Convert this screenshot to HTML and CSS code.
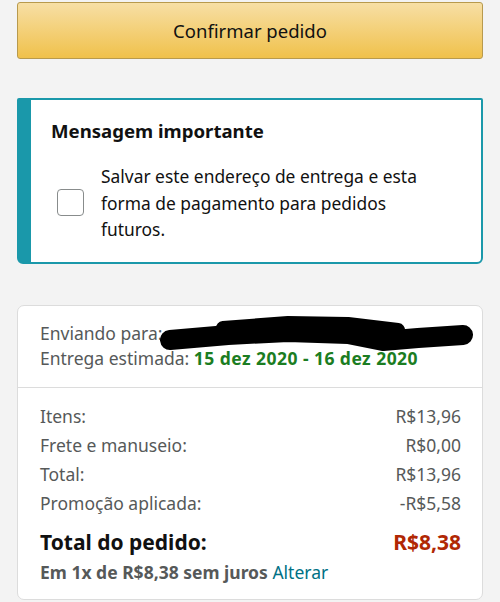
FILE: index.html
```html
<!DOCTYPE html>
<html lang="pt-BR">
<head>
    <meta charset="UTF-8">
    <meta name="viewport" content="width=device-width, initial-scale=1.0">
    <title>Revisar pedido</title>
    <link rel="stylesheet" href="styles.css">
</head>
<body>
    <button class="place-order">Confirmar pedido</button>

    <div class="notice">
        <div class="notice-title">Mensagem importante</div>
        <label class="notice-option">
            <span class="checkbox"></span>
            <span class="notice-text">Salvar este endereço de entrega e esta forma de pagamento para pedidos futuros.</span>
        </label>
    </div>

    <div class="summary">
        <div class="shipping">
            <div class="ship-line">
                Enviando para:
                <span class="redacted">
                    <svg width="330" height="44" viewBox="0 0 330 44">
                        <polyline points="20,29 78,24 138,21 198,23 233,30 268,27 313,24" fill="none" stroke="#000" stroke-width="20" stroke-linecap="round" stroke-linejoin="round"/>
                        <polyline points="73,17 138,12 198,13 248,19" fill="none" stroke="#000" stroke-width="14" stroke-linecap="round" stroke-linejoin="round"/>
                    </svg>
                </span>
            </div>
            <div class="ship-line">Entrega estimada: <span class="delivery-date">15 dez 2020 - 16 dez 2020</span></div>
        </div>
        <div class="totals">
            <div class="row"><span>Itens:</span><span>R$13,96</span></div>
            <div class="row"><span>Frete e manuseio:</span><span>R$0,00</span></div>
            <div class="row"><span>Total:</span><span>R$13,96</span></div>
            <div class="row"><span>Promoção aplicada:</span><span>-R$5,58</span></div>
            <div class="row grand-total"><span>Total do pedido:</span><span class="price">R$8,38</span></div>
            <div class="installments">Em 1x de R$8,38 sem juros <a href="#" class="link">Alterar</a></div>
        </div>
    </div>
</body>
</html>
```

FILE: styles.css
```css
body {
    font-family: "Noto Sans", "Open Sans", sans-serif;
    background: #f3f3f3;
    color: #111;
    margin: 0;
    padding: 2px 17px 0;
}

.place-order {
    display: block;
    width: 100%;
    height: 57px;
    font-family: inherit;
    font-size: 18.5px;
    color: #111;
    background: linear-gradient(to bottom, #f7dfa5, #f0c14b);
    border: 1px solid #b89a4d;
    border-radius: 3px;
    padding: 0;
}

.notice {
    margin-top: 39px;
    background: #fff;
    border: 2px solid #1a98aa;
    border-left-width: 14px;
    border-radius: 2px 2px 6px 6px;
    padding: 18px 20px 22px 20px;
    height: 166px;
    box-sizing: border-box;
}

.notice-title {
    font-size: 18.6px;
    font-weight: 700;
    line-height: 26px;
}

.notice-option {
    display: flex;
    align-items: center;
    margin-top: 19px;
}

.checkbox {
    flex: none;
    width: 27px;
    height: 27px;
    box-sizing: border-box;
    border: 1px solid #888c8c;
    border-radius: 4px;
    margin: 0 17px 0 6px;
}

.notice-text {
    max-width: 328px;
    font-size: 17.4px;
    line-height: 26.5px;
}

.summary {
    margin-top: 41px;
    background: #fff;
    border: 1px solid #dcdcdc;
    border-radius: 7px;
    height: 295px;
    box-sizing: border-box;
}

.shipping {
    padding: 15px 22px 16px;
    border-bottom: 1px solid #dcdcdc;
    color: #565959;
    font-size: 17.5px;
    line-height: 25px;
}

.ship-line {
    white-space: nowrap;
}

.redacted {
    position: relative;
}

.redacted svg {
    position: absolute;
    left: -12px;
    top: -10px;
}

.delivery-date {
    color: #1b7d22;
    font-weight: 700;
    letter-spacing: 0.45px;
}

.totals {
    padding: 14px 21px 0 22px;
    color: #565959;
    font-size: 17.5px;
}

.row {
    display: flex;
    justify-content: space-between;
    line-height: 29px;
}

.grand-total {
    color: #111;
    font-size: 21px;
    font-weight: 700;
    line-height: 30px;
    margin-top: 9px;
}

.grand-total .price {
    color: #b12704;
}

.installments {
    font-weight: 700;
    line-height: 30px;
}

.link {
    color: #007185;
    font-weight: 400;
    text-decoration: none;
}
```
